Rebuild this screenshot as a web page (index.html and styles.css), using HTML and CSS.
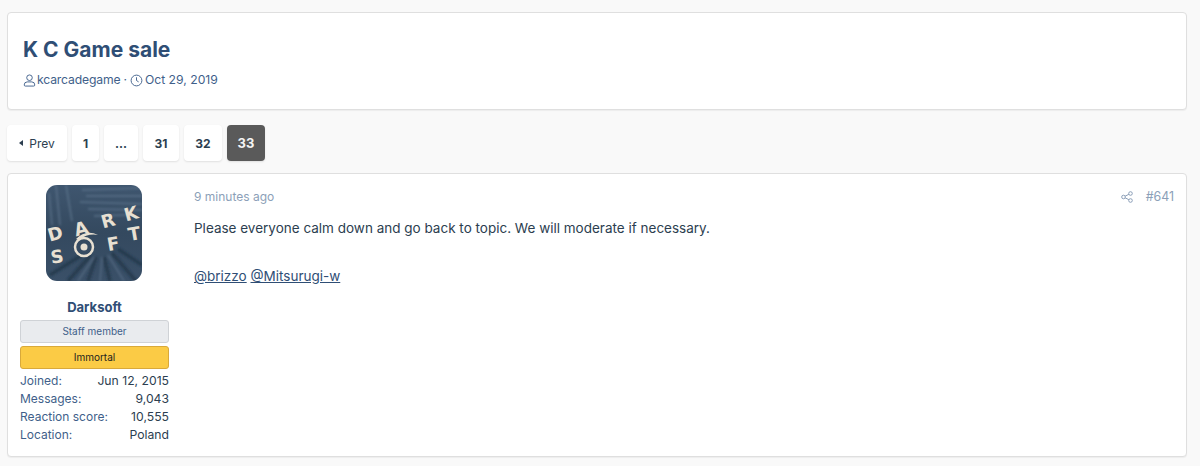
FILE: index.html
```html
<!DOCTYPE html>
<html lang="en">
<head>
<meta charset="utf-8">
<title>K C Game sale</title>
<link rel="stylesheet" href="styles.css">
</head>
<body>
<header class="card head">
  <h1 class="title">K C Game sale</h1>
  <div class="meta">
    <svg class="mi" viewBox="0 0 14 14" fill="none" stroke="currentColor" stroke-width="1"><circle cx="7" cy="4" r="3"/><path d="M2.5 13h9a1.2 1.2 0 0 0 1.2-1.2A3.3 3.3 0 0 0 9.5 8.500h-5a3.300 3.300 0 0 0-3.200 3.300A1.200 1.200 0 0 0 2.500 13z"/></svg>
    <span class="author">kcarcadegame</span><span class="dot">·</span>
    <svg class="mi clock" viewBox="0 0 14 14" fill="none" stroke="currentColor" stroke-width="1"><circle cx="7" cy="7" r="5.800"/><path d="M7 3.500V7l2.300 1.500"/></svg>
    <span class="date">Oct 29, 2019</span>
  </div>
</header>
<nav class="pager">
  <a class="pg prev"><span class="tri"></span>Prev</a>
  <a class="pg n1">1</a>
  <a class="pg dots">...</a>
  <a class="pg n31">31</a>
  <a class="pg n32">32</a>
  <a class="pg cur">33</a>
</nav>
<article class="card post">
  <aside class="user">
    <svg class="avatar" viewBox="0 0 96 96">
      <defs>
        <linearGradient id="bg" x1="0" y1="0" x2="0" y2="1"><stop offset="0" stop-color="#3f566f"/><stop offset=".5" stop-color="#34495f"/><stop offset="1" stop-color="#3a5068"/></linearGradient>
        <filter id="soft"><feGaussianBlur stdDeviation=".8"/></filter>
      </defs>
      <rect width="96" height="96" fill="url(#bg)"/>
      <g filter="url(#soft)">
        <path d="M36 5 96 3M40 11 96 11M34 17 96 19M42 24 96 25M48 31 80 30M20 0 26 36M10 0 14 40M3 8 6 40" stroke="#5f7690" stroke-width="2" fill="none" opacity=".6"/>
        <path d="M45 70 22 96M50 72 42 96M58 72 64 96M66 68 90 96M72 64 96 80M36 70 4 90" stroke="#223548" stroke-width="3.500" fill="none" opacity=".75"/>
        <path d="M48 72 32 96M56 72 54 96M62 70 78 96" stroke="#6a8099" stroke-width="1.500" fill="none" opacity=".5"/>
      </g>
      <g class="logo">
        <text x="9" y="55" transform="rotate(-16 9 48)">D</text>
        <text x="35" y="50" transform="rotate(-15 35 43)">A</text>
        <text x="62" y="42" transform="rotate(-15 62 35)">R</text>
        <text x="85" y="35" transform="rotate(-15 85 28)">K</text>
        <text x="11" y="78" transform="rotate(-8 11 71)">S</text>
        <text x="67" y="65" transform="rotate(-10 67 58)">F</text>
        <text x="88" y="55" transform="rotate(-10 88 48)">T</text>
      </g>
      <circle cx="38" cy="62" r="9" fill="none" stroke="#e8e0d2" stroke-width="2.500"/>
      <circle cx="38" cy="62" r="3.500" fill="#e8e0d2"/>
      <path d="M30 54Q40 44 52 50Q42 48 33 55z" fill="#e8e0d2"/>
    </svg>
    <div class="uname">Darksoft</div>
    <div class="badge staff">Staff member</div>
    <div class="badge rank">Immortal</div>
    <dl class="stats">
      <div class="row"><dt>Joined:</dt><dd>Jun 12, 2015</dd></div>
      <div class="row"><dt>Messages:</dt><dd>9,043</dd></div>
      <div class="row"><dt>Reaction score:</dt><dd>10,555</dd></div>
      <div class="row"><dt>Location:</dt><dd>Poland</dd></div>
    </dl>
  </aside>
  <div class="main">
    <div class="attr">
      <span>9 minutes ago</span>
      <span class="attr-r">
        <svg class="share" viewBox="0 0 12 12" fill="none" stroke="currentColor" stroke-width="1"><circle cx="9.500" cy="2.500" r="1.800"/><circle cx="2.500" cy="6" r="1.800"/><circle cx="9.500" cy="9.500" r="1.800"/><path d="M4.100 5.200 7.900 3.300M4.100 6.800l3.800 1.900"/></svg>
        <span>#641</span>
      </span>
    </div>
    <p class="line">Please everyone calm down and go back to topic. We will moderate if necessary.</p>
    <p class="line mentions"><a class="mention">@brizzo</a> <a class="mention">@Mitsurugi-w</a></p>
  </div>
</article>
</body>
</html>
```
FILE: styles.css
```css
* { box-sizing: border-box; }
html, body { margin: 0; padding: 0; }
body {
  background: #f9f9f9;
  font-family: Inter, "Liberation Sans", sans-serif;
  color: #2c3e50;
  padding: 12px 13px 0 7px;
  height: 466px;
  overflow: hidden;
}
.card {
  background: #fff;
  border: 1px solid #dfdfdf;
  border-radius: 4px;
  box-shadow: 0 1px 1px rgba(0,0,0,.05);
}
.head { height: 98px; padding: 24px 15px 0; }
.title {
  margin: 0;
  font-size: 21px;
  line-height: 26px;
  font-weight: 700;
  color: #2f4e75;
}
.meta {
  display: flex;
  align-items: center;
  margin-top: 9px;
  font-size: 12.200px;
  line-height: 16px;
  color: #3f5f8a;
}
.mi { width: 13px; height: 13px; margin-right: 1px; flex: none; }
.author { letter-spacing: -.16px; }
.clock { margin-right: 2px; }
.dot { margin: 0 3px; }
.pager { display: flex; gap: 5px; margin-top: 15px; height: 36px; }
.pg {
  display: flex;
  align-items: center;
  justify-content: center;
  height: 36px;
  background: #fff;
  border-radius: 4px;
  box-shadow: 0 1px 2px rgba(0,0,0,.1);
  font-size: 12px;
  font-weight: 700;
  color: #2c3e50;
}
.prev { width: 60px; font-weight: 400; }
.tri {
  width: 0; height: 0;
  border: 3px solid transparent;
  border-right: 4px solid #2c3e50;
  border-left: 0;
  margin-right: 6px;
}
.n1 { width: 27px; }
.dots { width: 34px; }
.n31 { width: 36px; }
.n32 { width: 38px; }
.cur { width: 38px; background: #5a5a5a; color: #f4f4f4; font-size: 13px; }
.post {
  display: flex;
  height: 284px;
  margin-top: 12px;
}
.user {
  width: 173px;
  flex: none;
  padding: 11px 12px 0;
  display: flex;
  flex-direction: column;
}
.avatar {
  width: 96px;
  height: 96px;
  border-radius: 11px;
  align-self: center;
  margin-right: 1px;
  flex: none;
}
.logo {
  font-family: "DejaVu Sans", sans-serif;
  font-size: 18px;
  font-weight: 700;
  fill: #e8e0d2;
  text-anchor: middle;
}
.uname {
  margin-top: 17px;
  text-align: center;
  font-size: 13px;
  line-height: 18px;
  font-weight: 700;
  color: #2f4e75;
}
.badge {
  height: 23px;
  border-radius: 3px;
  text-align: center;
  font-size: 10px;
  line-height: 21px;
  border: 1px solid;
}
.staff { background: #e9ebee; border-color: #cfd2d6; color: #3f5f8a; margin-top: 4px; }
.rank { background: #fbcb45; border-color: #d9a93a; color: #1d1d1d; margin-top: 3px; }
.stats { margin: 3px 0 0; font-size: 12px; line-height: 18px; }
.row { display: flex; justify-content: space-between; }
dt { color: #3f5f8a; }
dd { margin: 0; color: #2c3e50; font-size: 12.200px; }
.main { flex: 1; padding: 15px 12px 0 13px; min-width: 0; }
.attr {
  display: flex;
  justify-content: space-between;
  font-size: 12px;
  line-height: 16px;
  color: #8c9fb8;
}
.attr-r { display: flex; align-items: center; font-size: 12.400px; }
.share { width: 12px; height: 12px; margin-right: 13px; }
.line {
  margin: 13px 0 0;
  font-size: 13.500px;
  line-height: 20px;
  color: #2c3e50;
}
.mentions { margin-top: 28px; }
.mention { color: #2f4e75; text-decoration: underline; }
```
